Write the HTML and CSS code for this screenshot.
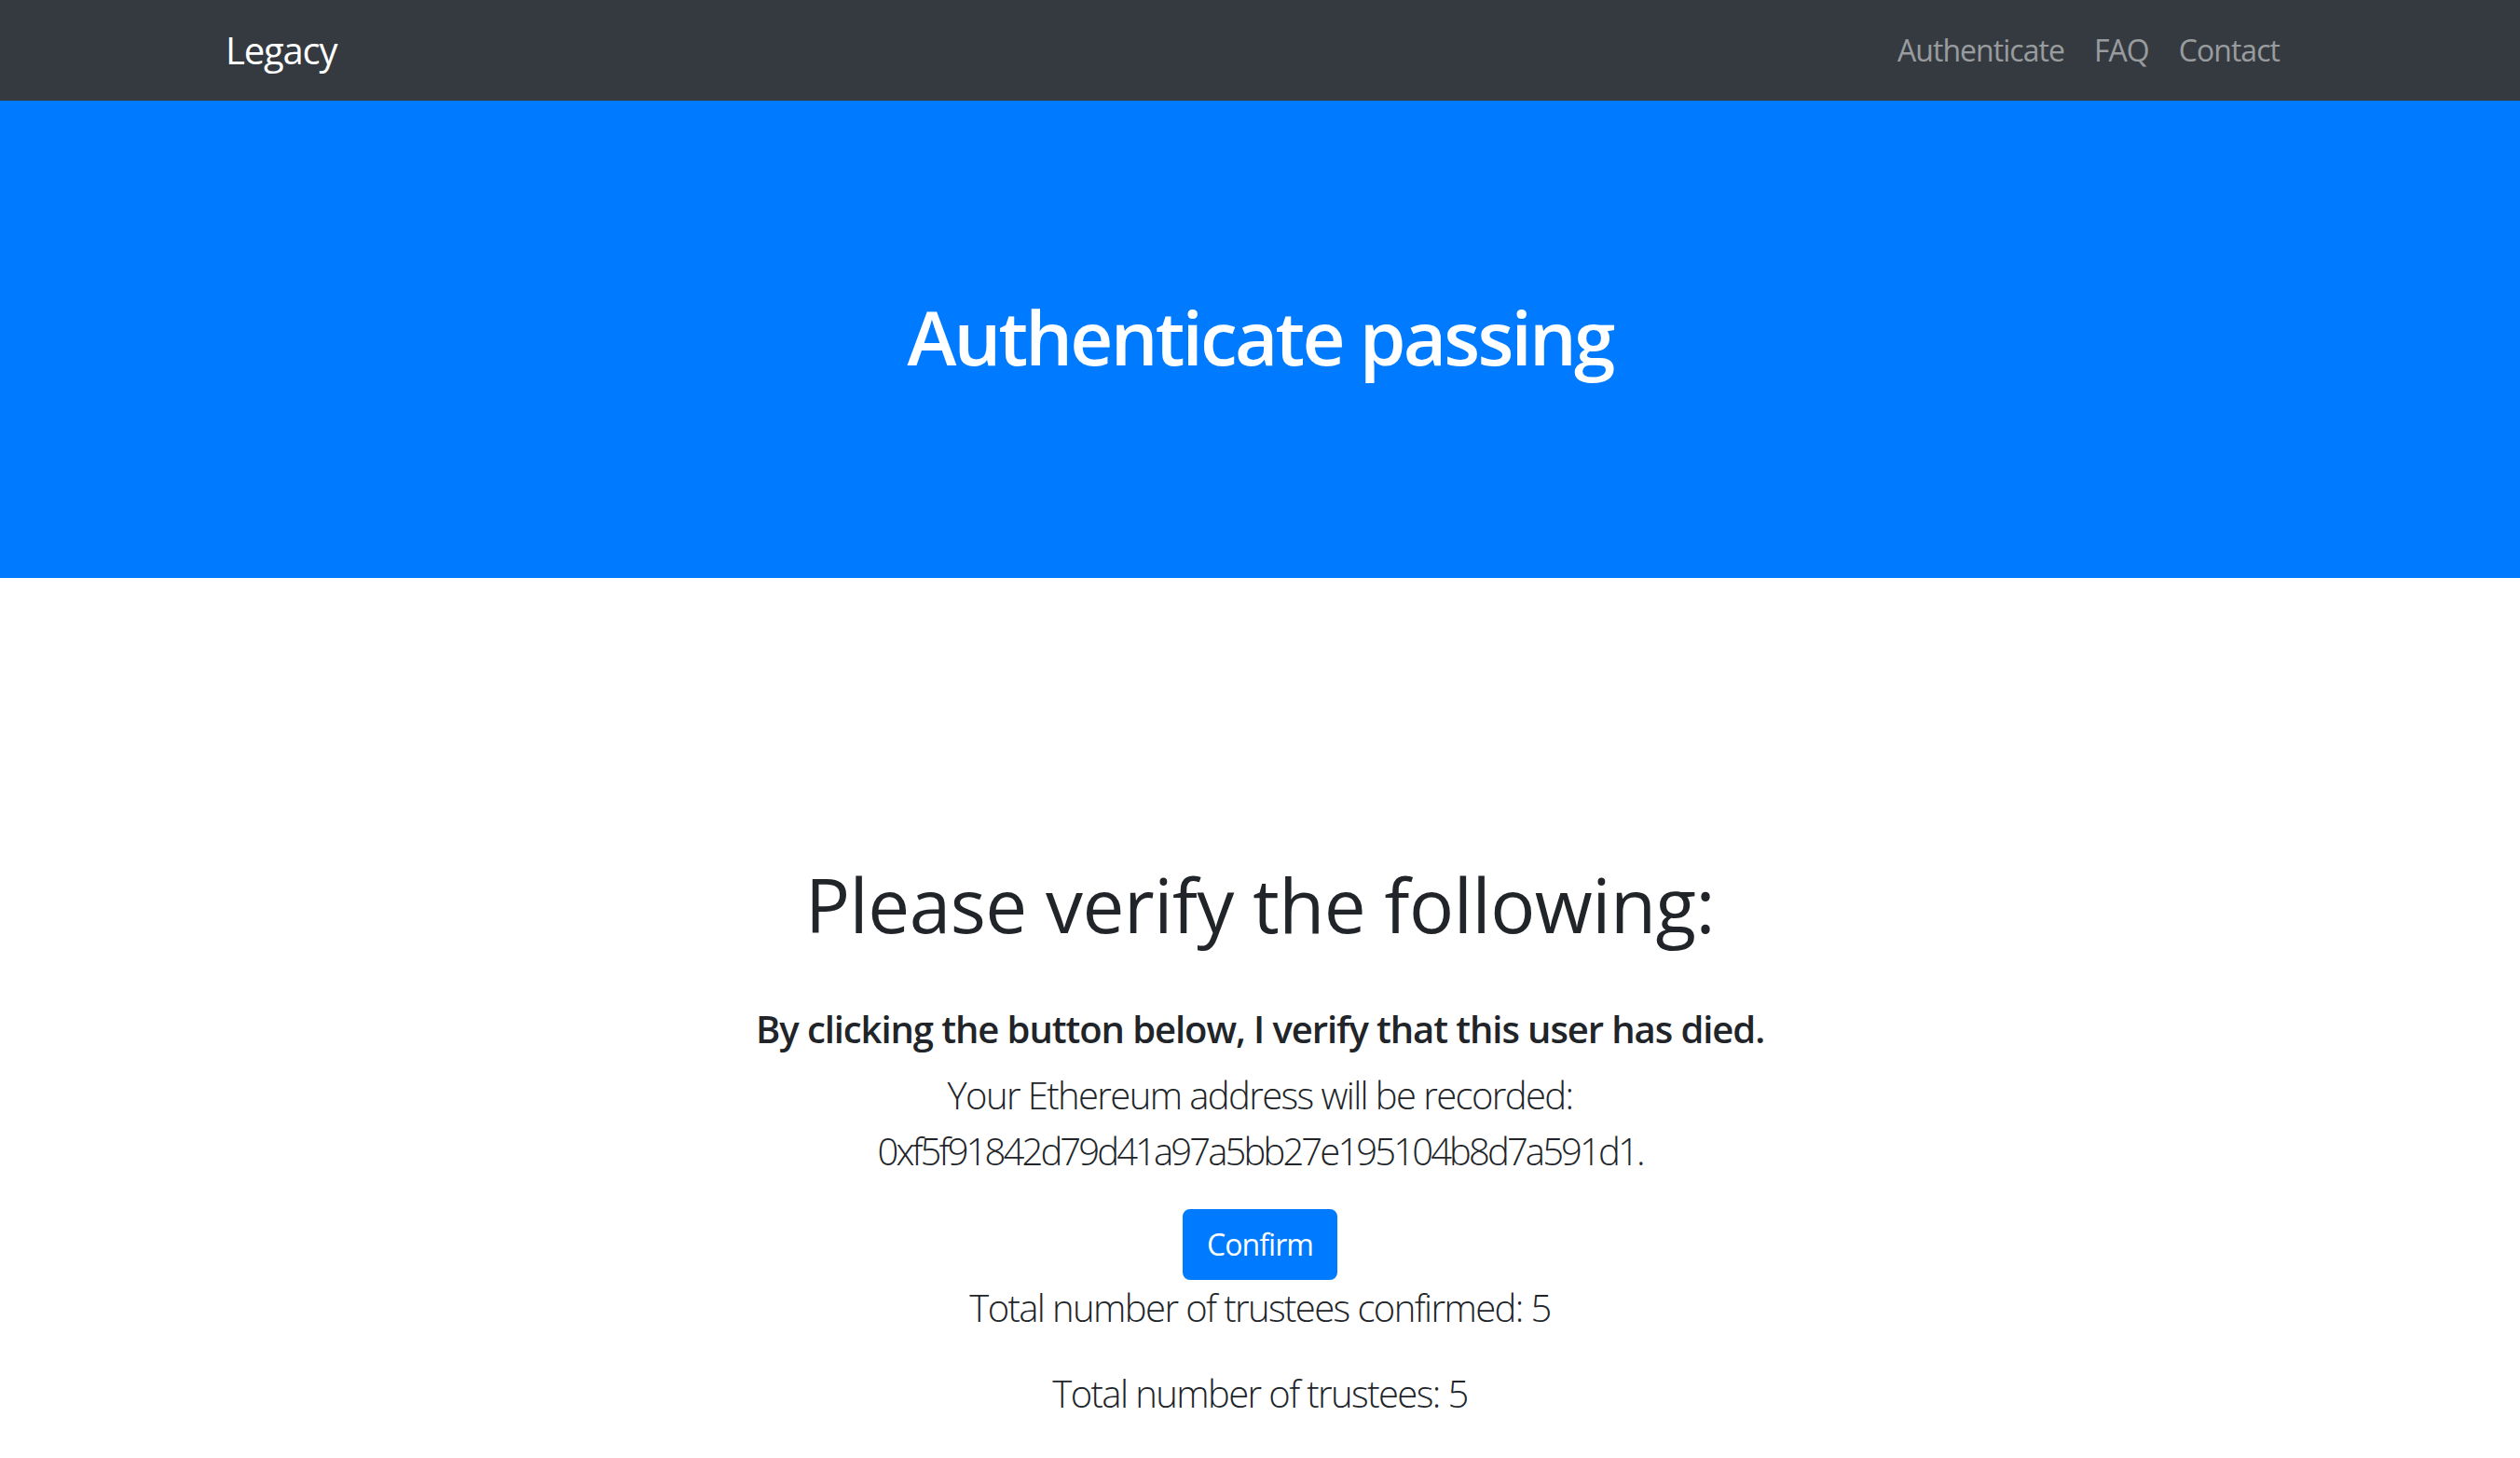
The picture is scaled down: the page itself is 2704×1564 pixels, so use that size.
FILE: index.html
```html
<!DOCTYPE html>
<html lang="en">
<head>
<meta charset="utf-8">
<title>Legacy</title>
<link rel="stylesheet" href="styles.css">
</head>
<body>
<nav class="navbar">
  <div class="container nav-inner">
    <a class="brand" href="#">Legacy</a>
    <ul class="nav-links">
      <li><a href="#">Authenticate</a></li>
      <li><a href="#">FAQ</a></li>
      <li><a href="#">Contact</a></li>
    </ul>
  </div>
</nav>
<header class="hero">
  <h1 class="hero-title">Authenticate passing</h1>
</header>
<main class="container content">
  <h1 class="verify-title">Please verify the following:</h1>
  <h5 class="verify-note">By clicking the button below, I verify that this user has died.</h5>
  <p class="lead address">Your Ethereum address will be recorded:<br><span class="hash">0xf5f91842d79d41a97a5bb27e195104b8d7a591d1.</span></p>
  <button class="btn-confirm" type="button">Confirm</button>
  <p class="lead count">Total number of trustees confirmed: 5</p>
  <p class="lead count">Total number of trustees: 5</p>
</main>
</body>
</html>
```
FILE: styles.css
```css
* { box-sizing: border-box; }
html, body { margin: 0; padding: 0; }
body {
  font-family: "Open Sans", "Noto Sans", sans-serif;
  font-size: 32px;
  line-height: 1.5;
  color: #212529;
  background: #fff;
  width: 2704px;
  min-height: 1564px;
  overflow: hidden;
}
.container {
  width: 100%;
  max-width: 2280px;
  margin: 0 auto;
  padding: 0 30px;
}
.navbar {
  background: #343a40;
  height: 108px;
  display: flex;
  align-items: center;
}
.nav-inner {
  display: flex;
  align-items: center;
  justify-content: space-between;
}
.brand {
  color: #fff;
  text-decoration: none;
  font-size: 40px;
  line-height: 60px;
  letter-spacing: -0.03em;
}
.nav-links {
  list-style: none;
  margin: 0;
  padding: 0;
  display: flex;
}
.nav-links a {
  display: block;
  padding: 0 16px;
  color: rgba(255,255,255,0.5);
  text-decoration: none;
  font-size: 32px;
  line-height: 48px;
  letter-spacing: -0.03em;
}
.hero {
  background: #007bff;
  height: 512px;
  display: flex;
  align-items: center;
  justify-content: center;
  padding-bottom: 6px;
}
.hero-title {
  margin: 0;
  color: #fff;
  font-size: 80px;
  line-height: 96px;
  font-weight: 600;
  letter-spacing: -0.035em;
}
.content {
  text-align: center;
  padding-top: 302px;
}
.verify-title {
  margin: 0 0 59px;
  font-size: 80px;
  line-height: 96px;
  font-weight: 500;
  letter-spacing: -0.006em;
}
.verify-note {
  margin: 0 0 14px;
  font-size: 40px;
  line-height: 54px;
  font-weight: 600;
  letter-spacing: -0.027em;
}
.lead {
  font-size: 40px;
  line-height: 60px;
  font-weight: 300;
  margin: 0 0 32px;
  letter-spacing: -0.04em;
}
.hash { letter-spacing: -0.072em; }
.btn-confirm {
  display: inline-block;
  font-family: inherit;
  font-size: 32px;
  line-height: 48px;
  padding: 12px 24px;
  border: 2px solid #007bff;
  border-radius: 8px;
  background: #007bff;
  color: #fff;
  letter-spacing: -0.03em;
  vertical-align: top;
}
```
